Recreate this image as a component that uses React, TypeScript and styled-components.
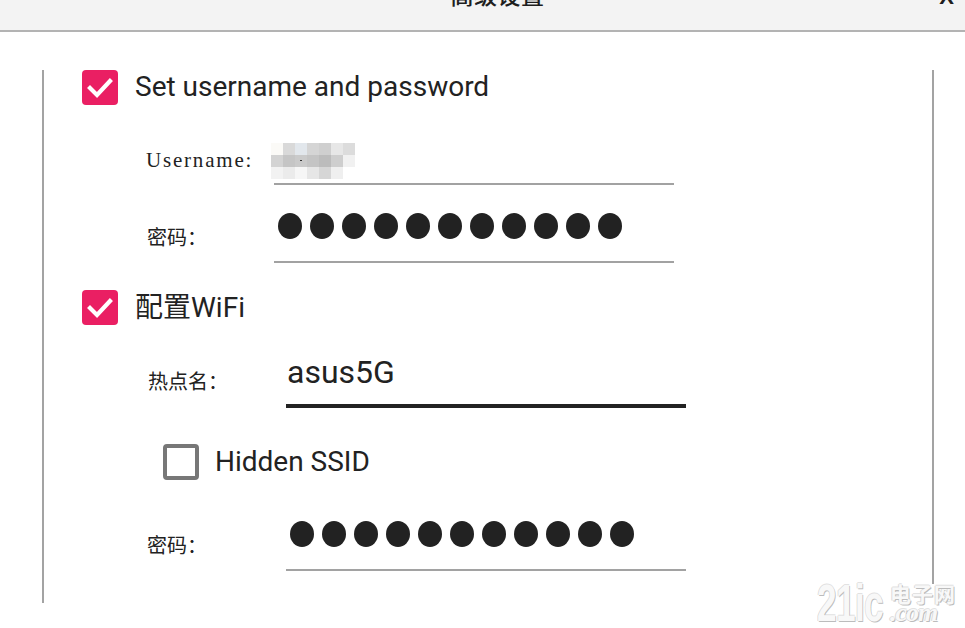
import React from "react";
import styled, { createGlobalStyle } from "styled-components";

const Global = createGlobalStyle`
  html, body { margin: 0; padding: 0; background: #ffffff; }
  body { font-family: Roboto, "Noto Sans CJK SC", sans-serif; color: #222222; }
  * { box-sizing: border-box; }
`;

const Page = styled.div`
  position: relative;
  width: 965px;
  height: 628px;
  overflow: hidden;
  background: #ffffff;
`;

const Header = styled.header`
  height: 32px;
  background: #f3f3f3;
  border-bottom: 2px solid #b3b3b3;
  display: flex;
  align-items: flex-start;
  justify-content: center;
  padding-left: 30px;
  overflow: hidden;
  position: relative;
`;

const Title = styled.h1`
  margin: -18px 0 0 0;
  font-family: "Noto Sans CJK SC", sans-serif;
  font-size: 23px;
  line-height: 24px;
  font-weight: 500;
  color: #1e1e1e;
  letter-spacing: 0.5px;
`;

const Close = styled.span`
  position: absolute;
  right: 11px;
  top: -14px;
  font-family: "Liberation Sans", sans-serif;
  font-weight: 700;
  font-size: 22px;
  line-height: 22px;
  color: #1e1e1e;
`;

const Frame = styled.section`
  display: flex;
  align-items: flex-start;
  margin-top: 38px;
  padding-left: 42px;
`;

const Rule = styled.div<{ $h: number }>`
  width: 2px;
  height: ${(p) => p.$h}px;
  background: #a3a3a3;
  flex: none;
`;

const Content = styled.div`
  width: 888px;
  padding-left: 38px;
  display: flex;
  flex-direction: column;
`;

const CheckRow = styled.label<{ $indent?: number; $mt?: number; $gap?: number }>`
  display: flex;
  align-items: center;
  gap: ${(p) => p.$gap ?? 17}px;
  height: 35px;
  margin-left: ${(p) => p.$indent ?? 0}px;
  margin-top: ${(p) => p.$mt ?? 0}px;
  font-family: Roboto, "Noto Sans CJK SC", sans-serif;
  font-size: 28px;
  color: #222222;
  line-height: 1;
`;

const BoxOn = styled.span`
  width: 36px;
  height: 35px;
  border-radius: 4px;
  background: #ea1f63;
  display: flex;
  align-items: center;
  justify-content: center;
  flex: none;
`;

const BoxOff = styled.span`
  width: 36px;
  height: 36px;
  border-radius: 4px;
  border: 4px solid #777777;
  background: #ffffff;
  flex: none;
`;

const CheckText = styled.span<{ $shift?: number }>`
  margin-top: ${(p) => p.$shift ?? 0}px;
`;

const Field = styled.div<{ $indent: number; $label: number; $mt: number }>`
  display: grid;
  grid-template-columns: ${(p) => p.$label}px 400px;
  margin-left: ${(p) => p.$indent}px;
  margin-top: ${(p) => p.$mt}px;
  align-items: center;
`;

const Label = styled.span`
  font-family: "Liberation Serif", "Noto Sans CJK SC", serif;
  font-size: 20px;
  color: #222222;
  line-height: 24px;
`;

const LatinLabel = styled(Label)`
  font-size: 21px;
  letter-spacing: 1.8px;
`;

const Input = styled.div<{ $active?: boolean }>`
  height: ${(p) => (p.$active ? 52 : 51)}px;
  border-bottom: ${(p) => (p.$active ? "4px solid #222222" : "2px solid #a2a2a2")};
  display: flex;
  align-items: flex-start;
  padding-top: 1px;
  padding-left: 4px;
`;

const Value = styled.span`
  font-family: Roboto, sans-serif;
  font-size: 32px;
  line-height: 32px;
  color: #222222;
  margin-top: -1px;
  margin-left: -3px;
`;

const Dots = styled.div`
  display: flex;
  gap: 8px;
`;

const Dot = styled.span`
  width: 24px;
  height: 26px;
  border-radius: 50%;
  background: #222222;
`;

const Mosaic = styled.div`
  display: grid;
  grid-template-columns: repeat(7, 12px);
  grid-auto-rows: 12px;
  margin-top: 8px;
  margin-left: -7px;
`;

const Cell = styled.span<{ $c: string }>`
  background: ${(p) => p.$c};
  position: relative;
`;

const Speck = styled.span`
  position: absolute;
  left: 5px;
  top: 5px;
  width: 2px;
  height: 1px;
  background: #333333;
`;

const Watermark = styled.div`
  position: absolute;
  right: 9px;
  bottom: 5px;
  display: flex;
  align-items: flex-end;
  gap: 5px;
  color: #f8f8f8;
  text-shadow: 1px 1px 0 #bcbcbc, -1px 0 0 #dadada, 0 -1px 0 #e2e2e2;
`;

const WmBig = styled.span`
  display: inline-block;
  font-family: "Liberation Sans", sans-serif;
  font-weight: 700;
  font-size: 52px;
  line-height: 40px;
  letter-spacing: -1px;
  width: 68px;
  white-space: nowrap;
  transform: scaleX(0.68);
  transform-origin: left bottom;
`;

const WmSide = styled.span`
  display: flex;
  flex-direction: column;
  align-items: flex-start;
  line-height: 1;
`;

const WmCn = styled.span`
  font-family: "Noto Sans CJK SC", sans-serif;
  font-size: 21px;
  font-weight: 700;
  letter-spacing: 1px;
  line-height: 20px;
`;

const WmCom = styled.span`
  font-family: "Liberation Serif", serif;
  font-style: italic;
  font-weight: 700;
  font-size: 26px;
  line-height: 20px;
  letter-spacing: -1px;
`;

const Check = () => (
  <svg width="26" height="22" viewBox="0 0 26 22">
    <polyline points="3,11 10,18 23,4" fill="none" stroke="#ffffff" strokeWidth="4.2" strokeLinecap="square" />
  </svg>
);

const mosaic: string[] = [
  "#fbfaf7", "#d9d9d9", "#e2e7ec", "#d5d5d5", "#cfcfcf", "#e7e7e7", "#dcdcdc",
  "#d3d3d3", "#c5c5c5", "#cacaca", "#c4c4c4", "#bcbcbc", "#cecece", "#f1f1f1",
  "#f2f2f2", "#ebebeb", "#f6f6f6", "#e6e6e6", "#d6d6d6", "#efefef", "#ffffff",
];

const Password = ({ n }: { n: number }) => (
  <Dots>
    {Array.from({ length: n }).map((_, i) => (
      <Dot key={i} />
    ))}
  </Dots>
);

export default function App() {
  return (
    <Page>
      <Global />
      <Header>
        <Title>高级设置</Title>
        <Close>X</Close>
      </Header>
      <Frame>
        <Rule $h={533} />
        <Content>
          <CheckRow>
            <BoxOn>
              <Check />
            </BoxOn>
            <CheckText $shift={-2}>Set username and password</CheckText>
          </CheckRow>
          <Field $indent={64} $label={128} $mt={29}>
            <LatinLabel>Username:</LatinLabel>
            <Input>
              <Mosaic>
                {mosaic.map((c, i) => (
                  <Cell key={i} $c={c}>
                    {i === 9 ? <Speck /> : null}
                  </Cell>
                ))}
              </Mosaic>
            </Input>
          </Field>
          <Field $indent={65} $label={127} $mt={27}>
            <Label>密码：</Label>
            <Input>
              <Password n={11} />
            </Input>
          </Field>
          <CheckRow $mt={27}>
            <BoxOn>
              <Check />
            </BoxOn>
            <CheckText $shift={1}>配置WiFi</CheckText>
          </CheckRow>
          <Field $indent={66} $label={138} $mt={31}>
            <Label>热点名：</Label>
            <Input $active>
              <Value>asus5G</Value>
            </Input>
          </Field>
          <CheckRow $indent={81} $mt={36} $gap={16}>
            <BoxOff />
            <CheckText $shift={1}>Hidden SSID</CheckText>
          </CheckRow>
          <Field $indent={65} $label={139} $mt={41}>
            <Label>密码：</Label>
            <Input>
              <Password n={11} />
            </Input>
          </Field>
        </Content>
        <Rule $h={514} />
      </Frame>
      <Watermark>
        <WmBig>21ic</WmBig>
        <WmSide>
          <WmCn>电子网</WmCn>
          <WmCom>.com</WmCom>
        </WmSide>
      </Watermark>
    </Page>
  );
}
